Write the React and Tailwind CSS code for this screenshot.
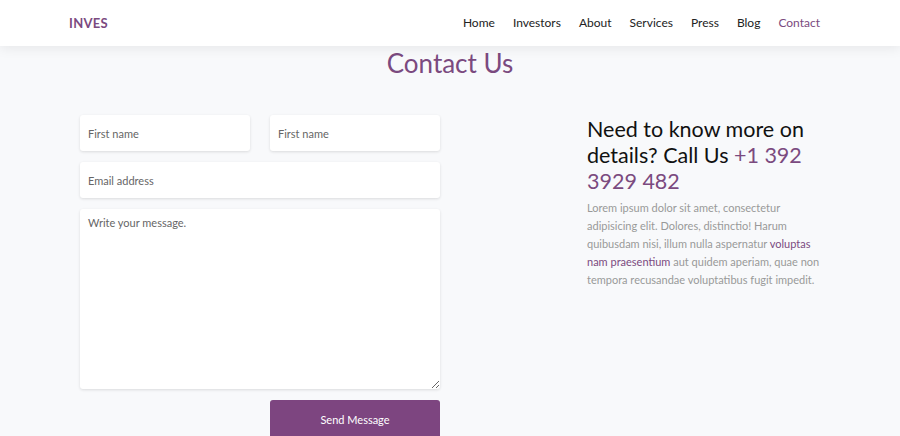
import React from "react";

export default function App() {
  const nav = ["Home", "Investors", "About", "Services", "Press", "Blog"];
  return (
    <div className="min-h-[436px] bg-[#f8f9fb] font-['Lato',sans-serif] overflow-hidden h-[436px]">
      <header className="h-[46px] bg-white shadow-[0_2px_12px_rgba(0,0,0,0.08)] flex items-center justify-between pl-[69px] pr-[80px] relative z-10">
        <div className="text-[13px] font-bold text-[#7b4a80] tracking-[0.3px] mt-[2px]">INVES</div>
        <nav className="flex items-center gap-[18px] text-[12px] text-[#222]">
          {nav.map((n) => (
            <span key={n}>{n}</span>
          ))}
          <span className="text-[#7b4a80]">Contact</span>
        </nav>
      </header>
      <h1 className="text-center text-[26px] font-normal text-[#7b4a7f] leading-[36px] mt-[-1px]">Contact Us</h1>
      <div className="flex pl-[80px] mt-[34px]">
        <form className="w-[360px] flex flex-col gap-[11px]">
          <div className="flex gap-[20px]">
            <input className="w-[170px] h-[36px] bg-white rounded-[3px] shadow-[0_1px_3px_rgba(0,0,0,0.12)] px-[8px] text-[11px] placeholder:text-[#666] outline-none" placeholder="First name" />
            <input className="w-[170px] h-[36px] bg-white rounded-[3px] shadow-[0_1px_3px_rgba(0,0,0,0.12)] px-[8px] text-[11px] placeholder:text-[#666] outline-none" placeholder="First name" />
          </div>
          <input className="w-[360px] h-[36px] bg-white rounded-[3px] shadow-[0_1px_3px_rgba(0,0,0,0.12)] px-[8px] text-[11px] placeholder:text-[#666] outline-none" placeholder="Email address" />
          <textarea className="block w-[360px] h-[180px] bg-white rounded-[3px] shadow-[0_1px_3px_rgba(0,0,0,0.12)] px-[8px] py-[6px] text-[11px] placeholder:text-[#666] outline-none" placeholder="Write your message." />
          <div className="flex justify-end">
            <button type="button" className="w-[170px] h-[40px] bg-[#7d4580] rounded-t-[3px] text-white text-[11px]">Send Message</button>
          </div>
        </form>
        <div className="ml-[147px] w-[236px] mt-[1px]">
          <h2 className="text-[21.5px] leading-[26px] text-[#111] font-normal">
            Need to know more on details? Call Us <span className="text-[#7b4a7f]">+1 392 3929 482</span>
          </h2>
          <p className="mt-[5px] text-[11px] leading-[18px] text-[#999]">
            Lorem ipsum dolor sit amet, consectetur adipisicing elit. Dolores, distinctio! Harum quibusdam nisi, illum nulla aspernatur <span className="text-[#7b4a7f]">voluptas nam praesentium</span> aut quidem aperiam, quae non tempora recusandae voluptatibus fugit impedit.
          </p>
        </div>
      </div>
    </div>
  );
}
